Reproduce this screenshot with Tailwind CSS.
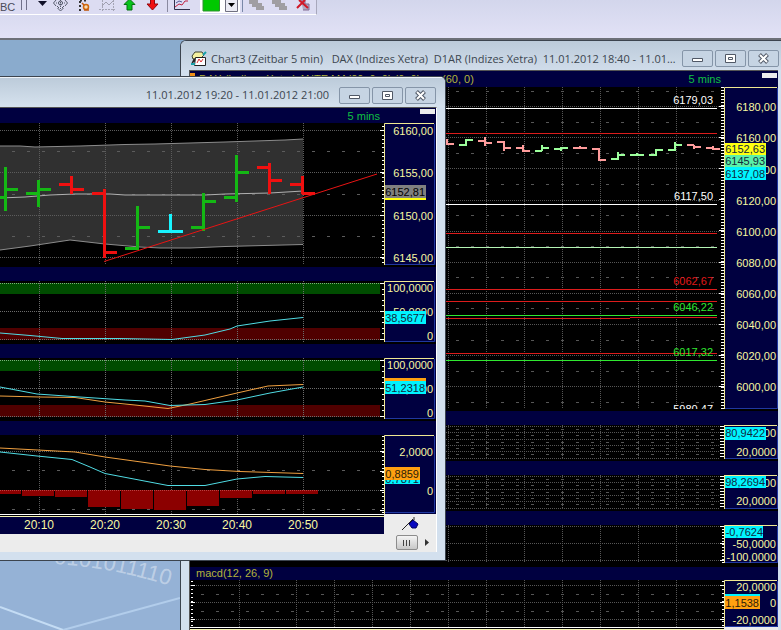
<!DOCTYPE html>
<html lang="de">
<head>
<meta charset="utf-8">
<meta name="viewport" content="width=device-width, initial-scale=1">
<title>Chart3 (Zeitbar 5 min)</title>
<script src="https://cdn.jsdelivr.net/npm/@tailwindcss/browser@4"></script>
</head>
<body class="font-['Liberation_Sans',Arial,sans-serif]">
<div class="flex h-screen flex-col overflow-hidden bg-[#8aabcd]">

  <!-- Toolbar -->
  <header class="h-10 shrink-0 border-b-2 border-[#6d7078] bg-linear-to-b from-[#d3d6ec] to-[#e2e2f6]">
    <div class="flex h-[15px] w-[317px] items-start border-r border-b border-r-[#a8a8bc] border-b-white bg-[#dcdcf2]" role="toolbar" aria-label="Chart">
      <button class="h-[14px] w-[16px] overflow-hidden text-left text-[11px] text-[#4a4a58]"><span class="block leading-[10px]">BC</span></button>
      <button aria-label="Pause"><svg class="block h-[14px] w-[17px]" viewBox="16 0 17 14"><path d="M21.5 0V10M26.500 0V10" stroke="#70708a"/></svg></button>
      <button aria-label="Menü"><svg class="block h-[14px] w-[17px]" viewBox="33 0 17 14"><path d="M38 1H47L42.500 6Z" fill="#101028"/></svg></button>
      <button aria-label="Verschieben"><svg class="block h-[14px] w-[23px]" viewBox="50 0 23 14"><g fill="none" stroke="#555a6a"><path d="M56 0L53.500 3L56 6M65 0L67.500 3L65 6M57.500 8L60.500 11L63.500 8"/><path d="M56 3H65M60.500 0V9" stroke-dasharray="1 1"/><circle cx="60.500" cy="3" r="2"/><path d="M57 6L59 8M64 6L62 8"/></g></svg></button>
      <button aria-label="Eigenschaften"><svg class="block h-[14px] w-[22px]" viewBox="73 0 22 14"><path d="M80 1V11M80 .5H88" stroke="#333" stroke-width="2" stroke-dasharray="2 2"/><circle cx="86" cy="7" r="2.500" fill="#f7d9b0" stroke="#d0680c" stroke-width="1.500"/><path d="M82 3L84 5M84 10H89" stroke="#c05a10" stroke-width="1.500"/></svg></button>
      <button aria-label="Raster"><svg class="block h-[14px] w-[24px]" viewBox="95 0 24 14"><path d="M102.500 0V11M99 9.500H115M113.500 0V11" stroke="#a5a5b5" stroke-dasharray="2 1"/><path d="M102 6L106 2L109 5L114 0" stroke="#a0a0b0" fill="none"/></svg></button>
      <button aria-label="Kaufen"><svg class="block h-[14px] w-[22px]" viewBox="119 0 22 14"><path d="M127 10V4.500H124L129.500 -1L135 4.500H132V10Z" fill="#08c41c" stroke="#057010"/></svg></button>
      <button aria-label="Verkaufen"><svg class="block h-[14px] w-[23px]" viewBox="141 0 23 14"><path d="M150.500 -1H154.500V4H158L152.500 10L147 4H150.500Z" fill="#f01010" stroke="#900810"/></svg></button>
      <button aria-label="Chartanalyse"><svg class="block h-[14px] w-[36px]" viewBox="164 0 36 14"><path d="M167.500 0V12" stroke="#8a8aa0"/><path d="M174.500 0V9.500H190" stroke="#30304a" fill="none"/><path d="M175 7L179 4L182 5L185 1H188" stroke="#c02040" fill="none"/><path d="M176 3L179 1L182 2" stroke="#555a9a" fill="none"/></svg></button>
      <button aria-label="Farbe"><svg class="block h-[14px] w-[43px]" viewBox="200 0 43 14"><path d="M200 0H240V13H200Z" fill="#fff"/><path d="M203 -1H219.500V11H203Z" fill="#00c800" stroke="#309030"/><path d="M225.500 -1H237.500V11.500H225.500Z" fill="#ececf4" stroke="#707080"/><path d="M228 3H235L231.500 7Z" fill="#000"/><path d="M242.500 0V12" stroke="#7a88a8"/></svg></button>
      <button aria-label="Kopieren"><svg class="block h-[14px] w-[24px]" viewBox="243 0 24 14"><path d="M249 0H258V3H262V6H264V10H256V7H252V4H249Z" fill="#a09ea2"/></svg></button>
      <button aria-label="Einfügen"><svg class="block h-[14px] w-[24px]" viewBox="267 0 24 14"><path d="M272 0H281V3H285V6H287V10H279V7H275V4H272Z" fill="#a09ea2"/></svg></button>
      <button aria-label="Löschen"><svg class="block h-[14px] w-[24px]" viewBox="291 0 24 14"><path d="M301 0H305V4H309V10H303" fill="#b0a8c0" stroke="#806890"/><path d="M297 8L305 0M299 0L308 8" stroke="#d01828" stroke-width="2"/></svg></button>
    </div>
  </header>

  <main class="relative min-h-0 flex-1">
    <!-- Wallpaper -->
    <svg class="absolute bottom-0 left-0 h-[70px] w-[180px] bg-[#95b2d6]" viewBox="0 560 180 70" aria-hidden="true">
      <defs><path id="arc" d="M54 564Q120 567 200 596"/></defs>
      <text class="fill-white/40 font-['Liberation_Sans'] text-[22px]"><textPath href="#arc">0101011110</textPath></text>
      <path d="M0 607L63 630" stroke="#c4dcf4" stroke-width="2"/><path d="M63 630L180 598" stroke="#b2cdeb" stroke-width="2"/>
    </svg>

    <!-- Chart3 window -->
    <section class="absolute inset-y-0 right-0 left-[180px] flex flex-col overflow-hidden rounded-tl-[6px] border-t border-l border-[#3c444e] bg-[#d3e0ee]" aria-label="Chart3">
      <div class="flex h-[29px] shrink-0 items-center gap-1 bg-linear-to-b from-[#bccbda] to-[#d0dcea] pt-[6px] pr-[2px] pl-[9px]">
        <svg class="h-[16px] w-[17px] shrink-0" viewBox="0 0 17 16" aria-hidden="true"><path d="M2 5L5 1H12L14 4L10 8H3Z" fill="#f4f0a0" stroke="#3c4030"/><path d="M1 13L4 7L6 10Z" fill="#222"/><path d="M5.500 6.500H15.500V14.500H4.500Z" fill="#fff" stroke="#222"/><path d="M7 12L9 8L11 11L13 8" fill="none" stroke="#d83030"/><path d="M13 4L16 1M1 13H5" stroke="#18a0a8" stroke-width="2"/></svg>
        <h2 class="min-w-0 flex-1 truncate font-['Open_Sans',sans-serif] text-[11px] leading-4 whitespace-pre text-[#3c4650]">Chart3 (Zeitbar 5 min)   DAX (Indizes Xetra)  D1AR (Indizes Xetra)  11.01.2012 18:40 - 11.01....</h2>
        <div class="flex shrink-0 gap-[2px]">
          <button aria-label="Minimieren" class="flex h-[17px] w-[31px] items-center justify-center rounded-[2px] border border-[#8595a8] bg-[#c6d4e3]"><svg class="h-[11px] w-[13px]" viewBox="0 0 13 11"><path d="M1.500 5.500H11.500V8.500H1.500Z" fill="#fff" stroke="#505866"/></svg></button>
          <button aria-label="Maximieren" class="flex h-[17px] w-[31px] items-center justify-center rounded-[2px] border border-[#8595a8] bg-[#c6d4e3]"><svg class="h-[11px] w-[13px]" viewBox="0 0 13 11"><path d="M1.500 1.500H11.500V9.500H1.500ZM4.500 4.500H8.500V6.500H4.500Z" fill="#fff" stroke="#505866"/></svg></button>
          <button aria-label="Schließen" class="flex h-[17px] w-[31px] items-center justify-center rounded-[2px] border border-[#8595a8] bg-[#c6d4e3]"><svg class="h-[11px] w-[13px]" viewBox="0 0 13 11"><path d="M2.500 1.500L10.500 9.500M10.500 1.500L2.500 9.500" stroke="#505866" stroke-width="4"/><path d="M3 2L10 9M10 2L3 9" stroke="#fff" stroke-width="2"/></svg></button>
        </div>
      </div>
      <div class="mr-[3px] ml-2 flex-1 border-t border-l border-[#555] bg-black">
        <div class="flex h-4 items-start bg-[#000040] pr-px text-[11px] leading-[17px] text-[#b4b43c]">
          <span class="mt-[2px] mr-1 size-[5px] bg-[#f09018]"></span>
          <span class="w-[243px] truncate">DAX (Indizes Xetra) ANTE MA(20, 0, 0) (0, 0)</span>
          <span class="flex-1 whitespace-nowrap">(60, 0)</span>
          <span class="mr-[41px] text-[#10c040]">5 mins</span>
          <button aria-label="Pane" class="mt-[2px] h-[5px] w-[15px] bg-[#ececec]"></button>
        </div>

        <svg class="block h-[322px] w-full" viewBox="190 87 588 322" preserveAspectRatio="xMaxYMin meet" role="img" aria-label="DAX 5 Minuten">
          <g stroke="#565656" stroke-dasharray="1 1" shape-rendering="crispEdges" fill="none">
            <path d="M239.500 87V409M296.500 87V409M334.500 87V409M372.500 87V409M410.500 87V409M448.500 87V409M486.500 87V409M524.500 87V409M562.500 87V409M600.500 87V409M638.500 87V409M676.500 87V409"/>
            <path d="M190 106.500H720M190 137.500H720M190 168.500H720M190 200.500H720M190 231.500H720M190 262.500H720M190 293.500H720M190 324.500H720M190 355.500H720M190 386.500H720"/>
            <path stroke-dasharray="3 12" stroke-dashoffset="4" d="M190 91.500H720M190 122.500H720M190 153.500H720M190 184.500H720M190 215.500H720M190 246.500H720M190 277.500H720M190 308.500H720M190 340.500H720M190 371.500H720M190 402.500H720"/>
          </g>
          <g shape-rendering="crispEdges">
            <path fill="#fff" d="M190 108H717V109H190ZM190 204H717V205H190Z"/>
            <path fill="#dc1c1c" d="M190 133H717V134H190ZM190 233H717V234H190ZM190 289H717V290H190ZM190 301H717V302H190ZM190 318H630V319H190ZM630 317H717V318H630ZM190 353H717V354H190Z"/>
            <path fill="#b4f4b4" d="M190 247H717V248H190Z"/>
            <path fill="#30e830" d="M190 315H717V316H190ZM190 360H717V361H190Z"/>
          </g>
          <g fill="none" shape-rendering="crispEdges">
            <path stroke="#ff9c9c" stroke-width="2" d="M447 139V144H454M478 141H485M485 137V146M485 143H492M497 142H504V148H511M504 148V151M516 148H523M523 145V151H530M573 148H587M580 146V149M592 149H599V160H606M687 145H694M694 145V149M694 147H701M706 148H713M713 146V150M713 149H720"/>
            <path stroke="#9cff9c" stroke-width="2" d="M459 145H466M466 146V140H473M535 151H542M542 151V145M542 148H549M554 149H561M561 147V151M561 148H568M611 159H618V152M618 155H625M630 155H644M637 153V156M649 155H656V149M656 150H663M668 150H675V142M675 145H682"/>
            <path stroke="#fff" stroke-width="3" stroke-dasharray="1 2" d="M722.500 87V409"/>
            <path stroke="#fff" stroke-width="5" stroke-dasharray="1 30.100" d="M721.500 106V409"/>
          </g>
          <g class="font-['Liberation_Sans'] text-[11px]" text-anchor="end">
            <text x="713" y="104" fill="#fff">6179,03</text><text x="713" y="200" fill="#fff">6117,50</text>
            <text x="713" y="285" fill="#e01818">6062,67</text><text x="713" y="311" fill="#30e830">6046,22</text>
            <text x="713" y="356" fill="#30e830">6017,32</text><text x="713" y="413" fill="#fff">5980,47</text>
          </g>
          <path d="M724 87H778V409H724Z" fill="#000040"/>
          <path d="M724.500 409V87.500H777" stroke="#f0e890" fill="none"/><path d="M777.500 88V408.500H725" stroke="#2038a0" fill="none"/>
          <g class="font-['Liberation_Sans'] text-[11px]" text-anchor="end" fill="#f8f8a0">
            <text x="776" y="111">6180,00</text><text x="776" y="142">6160,00</text><text x="776" y="174">6140,00</text><text x="776" y="205">6120,00</text><text x="776" y="236">6100,00</text><text x="776" y="267">6080,00</text><text x="776" y="298">6060,00</text><text x="776" y="329">6040,00</text><text x="776" y="360">6020,00</text><text x="776" y="391">6000,00</text>
            <path d="M725 143H766V155H725Z" fill="#ffff10"/><path d="M725 155H766V167H725Z" fill="#5cf0a8"/><path d="M725 167H766V180H725Z" fill="#00f4ff"/>
            <g fill="#10283c"><text x="765" y="153">6152,63</text><text x="765" y="165">6145,93</text><text x="765" y="178">6137,08</text></g>
          </g>
        </svg>

        <div class="h-4 border-t-2 border-black bg-[#000040]"></div>
        <svg class="block h-[34px] w-full" viewBox="190 425 588 34" preserveAspectRatio="xMaxYMin meet" role="img" aria-label="Indikator 80,9422">
          <g id="dense" fill="none" shape-rendering="crispEdges" stroke="#565656" stroke-dasharray="1 1">
            <path d="M448.500 425V459M486.500 425V459M524.500 425V459M562.500 425V459M600.500 425V459M638.500 425V459M676.500 425V459M190 426.500H720M190 432.500H720M190 439.500H720M190 445.500H720M190 451.500H720M190 458.500H720"/>
            <path stroke-dasharray="3 12" stroke-dashoffset="4" d="M190 429.500H720M190 435.500H720M190 442.500H720M190 448.500H720M190 454.500H720"/>
            <path stroke="#fff" stroke-width="4" stroke-dasharray="1 2" d="M722 426V459"/>
            <path d="M724 425H778V459H724Z" fill="#000040" stroke="none"/>
            <path d="M724.500 459V425.500H777" stroke="#f0e890" stroke-dasharray="none"/><path d="M777.500 426V458.500H725" stroke="#2038a0" stroke-dasharray="none"/>
          </g>
          <g class="font-['Liberation_Sans'] text-[11px]" text-anchor="end" fill="#f8f8a0">
            <text x="776" y="437">80,0000</text><text x="776" y="456">20,0000</text>
            <path d="M725 427H766V440H725Z" fill="#00f4ff"/><text x="765" y="437" fill="#10283c">80,9422</text>
          </g>
        </svg>

        <div class="h-4 border-t-2 border-black bg-[#000040]"></div>
        <svg class="block h-[34px] w-full" viewBox="190 475 588 34" preserveAspectRatio="xMaxYMin meet" role="img" aria-label="Indikator 98,2694">
          <use href="#dense" y="50"/>
          <g class="font-['Liberation_Sans'] text-[11px]" text-anchor="end" fill="#f8f8a0">
            <text x="776" y="487">80,0000</text><text x="776" y="505">20,0000</text>
            <path d="M725 476H766V488H725Z" fill="#00f4ff"/><text x="765" y="486" fill="#10283c">98,2694</text>
          </g>
        </svg>

        <div class="h-4 border-t-2 border-black bg-[#000040]"></div>
        <svg class="block h-[38px] w-full" viewBox="190 525 588 38" preserveAspectRatio="xMaxYMin meet" role="img" aria-label="Indikator -0,7624">
          <g fill="none" shape-rendering="crispEdges">
            <path stroke="#565656" stroke-dasharray="1 1" d="M448.500 525V563M486.500 525V563M524.500 525V563M562.500 525V563M600.500 525V563M638.500 525V563M676.500 525V563M190 526.500H720M190 543.500H720M190 560.500H720"/>
            <path stroke="#fff" stroke-width="2" stroke-dasharray="1 2" d="M723 526V563"/><path stroke="#fff" stroke-width="4" stroke-dasharray="1 16" d="M722 526V563"/>
          </g>
          <path d="M724 525H778V563H724Z" fill="#000040"/>
          <path d="M724.500 563V525.500H777" stroke="#f0e890" fill="none"/><path d="M777.500 526V562.500H725" stroke="#2038a0" fill="none"/>
          <g class="font-['Liberation_Sans'] text-[11px]" text-anchor="end" fill="#f8f8a0">
            <text x="776" y="548">-50,0000</text><text x="776" y="561">-100,0000</text>
            <path d="M725 526H763V538H725Z" fill="#00f4ff"/><text x="763" y="536" fill="#10283c">-0,7624</text>
          </g>
        </svg>

        <div class="h-[17px] border-t-4 border-black bg-[#000040] pl-[6px] text-[11px] leading-[13px] text-[#b4b43c]">macd(12, 26, 9)</div>
        <svg class="block h-[50px] w-full" viewBox="190 580 588 50" preserveAspectRatio="xMaxYMin meet" role="img" aria-label="MACD">
          <g fill="none" shape-rendering="crispEdges">
            <path stroke="#565656" stroke-dasharray="1 1" d="M239.500 580V627M296.500 580V627M334.500 580V627M372.500 580V627M410.500 580V627M448.500 580V627M486.500 580V627M524.500 580V627M562.500 580V627M600.500 580V627M638.500 580V627M676.500 580V627M190 585.500H720M190 602.500H720M190 619.500H720"/>
            <path stroke="#565656" stroke-dasharray="3 12" stroke-dashoffset="4" d="M190 594.500H720M190 611.500H720"/>
            <path stroke="#fff" stroke-width="2" stroke-dasharray="1 3" d="M192 581V627M723 581V627"/><path stroke="#fff" stroke-width="4" stroke-dasharray="1 16" d="M193 585V627M722 585V627"/>
            <path stroke="#fff" d="M190 627.500H724"/><path stroke="#f4f4b0" d="M190 629.500H724"/>
          </g>
          <path d="M724 627H778V630H724Z" fill="#ececec"/>
          <path d="M724 580H778V627H724Z" fill="#000040"/>
          <path d="M724.500 627V580.500H777" stroke="#f0e890" fill="none"/><path d="M777.500 581V626.500H725" stroke="#2038a0" fill="none"/>
          <g class="font-['Liberation_Sans'] text-[11px]" text-anchor="end" fill="#f8f8a0">
            <text x="776" y="591">20,0000</text><text x="776" y="607">0</text><text x="776" y="624">-20,0000</text>
            <path d="M725 594H760V596H725Z" fill="#00f4ff"/><path d="M725 596H760V609H725Z" fill="#ffa010"/><text x="759" y="607" fill="#2c1c08">1,1538</text>
          </g>
        </svg>
      </div>
    </section>

    <!-- Front chart window -->
    <section class="absolute top-9 left-0 w-[446px] overflow-hidden rounded-tr-[6px] border-t border-r border-b border-[#3c444e] bg-[#d3e0ee]" aria-label="Chart">
      <div class="flex h-[30px] items-center justify-end gap-[10px] border-t border-white/60 bg-linear-to-b from-[#bccbda] to-[#d6e2ee] pr-[9px] pt-[5px]">
        <h2 class="font-['Open_Sans',sans-serif] text-[11px] leading-4 text-[#3c4650]">11.01.2012 19:20 - 11.01.2012 21:00</h2>
        <div class="flex gap-[2px]">
          <button aria-label="Minimieren" class="flex h-[17px] w-[31px] items-center justify-center rounded-[2px] border border-[#8595a8] bg-[#c6d4e3]"><svg class="h-[11px] w-[13px]" viewBox="0 0 13 11"><path d="M1.500 5.500H11.500V8.500H1.500Z" fill="#fff" stroke="#505866"/></svg></button>
          <button aria-label="Maximieren" class="flex h-[17px] w-[31px] items-center justify-center rounded-[2px] border border-[#8595a8] bg-[#c6d4e3]"><svg class="h-[11px] w-[13px]" viewBox="0 0 13 11"><path d="M1.500 1.500H11.500V9.500H1.500ZM4.500 4.500H8.500V6.500H4.500Z" fill="#fff" stroke="#505866"/></svg></button>
          <button aria-label="Schließen" class="flex h-[17px] w-[31px] items-center justify-center rounded-[2px] border border-[#8595a8] bg-[#c6d4e3]"><svg class="h-[11px] w-[13px]" viewBox="0 0 13 11"><path d="M2.500 1.500L10.500 9.500M10.500 1.500L2.500 9.500" stroke="#505866" stroke-width="4"/><path d="M3 2L10 9M10 2L3 9" stroke="#fff" stroke-width="2"/></svg></button>
        </div>
      </div>
      <div class="mr-2 mb-2 border-t border-r border-t-[#555] border-r-white bg-black">
        <div class="flex h-[15px] items-start justify-end bg-[#000040] pr-px text-[11px] leading-[17px] text-[#10c040]">
          <span class="mr-10">5 mins</span>
          <button aria-label="Pane" class="mt-px h-[5px] w-[15px] bg-[#ececec]"></button>
        </div>

        <svg class="block h-[142px] w-full" viewBox="0 123 436 142" preserveAspectRatio="xMaxYMin meet" role="img" aria-label="Kursverlauf">
          <path d="M0 146L20 146L35 147L80 146L125 144.500L155 144L225 142L285 140L303 139V244.500L225 246.500L190 248L160 248L140 247L105 244L70 240L30 246L0 250Z" fill="#303030"/>
          <g stroke="#5c5c5c" stroke-dasharray="1 1" shape-rendering="crispEdges" fill="none">
            <path d="M39.500 123V265M105.500 123V265M171.500 123V265M237.500 123V265M303.500 123V265M0 130.500H380M0 172.500H380M0 215.500H380M0 257.500H380"/>
            <path stroke-dasharray="3 12" stroke-dashoffset="3" d="M0 151.500H380M0 194.500H380M0 236.500H380"/>
          </g>
          <g fill="none" stroke="#8c8c8c"><path d="M0 146L20 146L35 147L80 146L125 144.500L155 144L225 142L285 140L303 139M303 244.500L225 246.500L190 248L160 248L140 247L105 244L70 240L30 246L0 250"/><path stroke="#b0b0b0" d="M0 198L25 197L50 195L75 194L110 194L125 195L205 195L225 194L270 193L303 191"/></g>
          <g fill="none" stroke-width="3" shape-rendering="crispEdges">
            <path stroke="#14b814" d="M5.500 167V211M0 197.500H5M5 189.500H18M38.500 180V207M26 193.500H38M38 189.500H51M137.500 206V250M125 248.500H137M137 227.500H150M203.500 193V231M191 227.500H203M203 201.500H216M236.500 155V202M224 197.500H236M236 172.500H249"/>
            <path stroke="#f01010" d="M71.500 176V194M59 184.500H71M71 189.500H84M104.500 189V258M92 193.500H104M104 252.500H117M269.500 163V194M257 167.500H269M269 180.500H282M302.500 176V194M290 184.500H302M302 193.500H315"/>
            <path stroke="#18f4ff" d="M170.500 214V232M158 231.500H183"/>
          </g>
          <path d="M104 261.500L377 174" stroke="#e81414" fill="none"/>
          <g stroke="#fff" shape-rendering="crispEdges"><path stroke-width="2" stroke-dasharray="1 3.250" d="M383 126V265"/><path stroke-width="4" stroke-dasharray="1 41.300" d="M382 130V265"/></g>
          <path d="M384 123H436V265H384Z" fill="#000040"/>
          <path d="M384.500 265V123.500H434" stroke="#f0e890" fill="none"/><path d="M434.500 124V264.500H385" stroke="#2038a0" fill="none"/>
          <g class="font-['Liberation_Sans'] text-[11px]" text-anchor="end" fill="#f8f8a0">
            <text x="433" y="135">6160,00</text><text x="433" y="177">6155,00</text><text x="433" y="220">6150,00</text><text x="433" y="262">6145,00</text>
            <path d="M385 185H426V198H385Z" fill="#808080"/><path d="M385 198H426V200H385Z" fill="#ffff10"/><text x="425" y="196" fill="#000">6152,81</text>
          </g>
        </svg>

        <div class="h-4 border-t-2 border-black bg-[#000040]"></div>
        <svg class="block h-[61px] w-full" viewBox="0 281 436 61" preserveAspectRatio="xMaxYMin meet" role="img" aria-label="Oszillator 38,5677">
          <g id="osc">
            <path d="M0 283H380V294H0Z" fill="#004c00"/><path d="M0 328H380V340H0Z" fill="#500000"/>
            <g stroke="#6c6c6c" stroke-dasharray="1 1" shape-rendering="crispEdges" fill="none"><path d="M39.500 281V342M105.500 281V342M171.500 281V342M237.500 281V342M303.500 281V342M0 311.500H380M0 339.500H380"/><path stroke="#78b078" d="M0 283.500H380"/></g>
            <g stroke="#fff" shape-rendering="crispEdges"><path stroke-width="2" stroke-dasharray="1 4.600" d="M383 283V341"/><path stroke-width="4" stroke-dasharray="1 27" d="M382 283V341"/></g>
            <path d="M384 281H436V342H384Z" fill="#000040"/>
            <path d="M384.500 342V281.500H434" stroke="#f0e890" fill="none"/><path d="M434.500 282V341.500H385" stroke="#2038a0" fill="none"/>
            <g class="font-['Liberation_Sans'] text-[11px]" text-anchor="end" fill="#f8f8a0"><text x="433" y="292">100,0000</text><text x="433" y="316">50,0000</text><text x="433" y="340">0</text></g>
          </g>
          <path d="M0 333L30 335.500L62 338.500L120 338.500L172 339.500L205 335L230 329L237 326L270 321L303 317.500" fill="none" stroke="#50dce4"/>
          <path d="M385 311H426V324H385Z" fill="#00f4ff"/><text class="font-['Liberation_Sans'] text-[11px]" text-anchor="end" x="425" y="322" fill="#10283c">38,5677</text>
        </svg>

        <div class="h-4 border-t-2 border-black bg-[#000040]"></div>
        <svg class="block h-[61px] w-full" viewBox="0 358 436 61" preserveAspectRatio="xMaxYMin meet" role="img" aria-label="Oszillator 51,2318">
          <use href="#osc" y="77"/>
          <path d="M0 396L40 397L75 397.500L105 402L135 405L168 408.500L190 404L237 393L268 386L303 384.500" fill="none" stroke="#f0a040"/>
          <path d="M0 387L37 394L80 397L125 400L145 401L170 405.500L205 404.500L237 400L270 393L303 387" fill="none" stroke="#50dce4"/>
          <path d="M385 378H426V381H385Z" fill="#ffa010"/><path d="M385 381H426V394H385Z" fill="#00f4ff"/><text class="font-['Liberation_Sans'] text-[11px]" text-anchor="end" x="425" y="392" fill="#10283c">51,2318</text>
        </svg>

        <div class="h-4 border-t-2 border-black bg-[#000040]"></div>
        <svg class="block h-[79px] w-full" viewBox="0 435 436 79" preserveAspectRatio="xMaxYMin meet" role="img" aria-label="MACD">
          <g stroke="#5c5c5c" stroke-dasharray="1 1" shape-rendering="crispEdges" fill="none">
            <path d="M39.500 435V514M105.500 435V514M171.500 435V514M237.500 435V514M303.500 435V514M0 451.500H380M0 490.500H380"/>
            <path stroke-dasharray="3 12" stroke-dashoffset="3" d="M0 470.500H380M0 509.500H380"/>
          </g>
          <path fill="#8c0000" d="M0 490H21V494H0ZM22 490H54V496H22ZM55 490H87V497H55ZM88 490H120V507H88ZM121 490H153V509H121ZM154 490H186V510H154ZM187 490H219V506H187ZM220 490H252V498H220ZM253 490H285V494H253ZM286 490H318V494H286Z"/>
          <path d="M0 490.500H318" stroke="#b84040" stroke-dasharray="1 1"/>
          <path d="M0 448L75 452L105 457L170 466L205 469.500L240 471.500L303 473.500" fill="none" stroke="#f0a040"/>
          <path d="M0 452L37 456L72 459.500L90 467L105 473.500L168 485.500L205 485.500L237 479L265 476.500L303 477.500" fill="none" stroke="#50dce4"/>
          <g stroke="#fff" shape-rendering="crispEdges"><path stroke-width="2" stroke-dasharray="1 3" d="M383 436V514"/><path stroke-width="4" stroke-dasharray="1 18.500" d="M382 451V514"/></g>
          <path d="M384 435H436V514H384Z" fill="#000040"/>
          <path d="M384.500 514V435.500H434" stroke="#f0e890" fill="none"/><path d="M434.500 436V512.500H385" stroke="#2038a0" fill="none"/>
          <g class="font-['Liberation_Sans'] text-[11px]" text-anchor="end" fill="#f8f8a0">
            <text x="433" y="456">2,0000</text><text x="433" y="495">0</text>
            <path d="M385 480H420V484H385Z" fill="#00f4ff"/><text x="419" y="483" fill="#10283c">0,7871</text>
            <path d="M385 467H420V480H385Z" fill="#ffa010"/><text x="419" y="478" fill="#2c1c08">0,8859</text>
          </g>
        </svg>

        <div class="flex h-5 bg-[#ececec]">
          <div class="w-[384px] border-t border-white bg-black pt-px">
            <div class="flex h-[18px] border-t border-[#f4f4b0] bg-[#000040] pl-[6px] text-[12px] leading-[17px] text-[#f8f8a0]">
              <span class="w-[66px] text-center">20:10</span><span class="w-[66px] text-center">20:20</span><span class="w-[66px] text-center">20:30</span><span class="w-[66px] text-center">20:40</span><span class="w-[66px] text-center">20:50</span>
            </div>
          </div>
          <button aria-label="Anheften" class="flex flex-1 items-center justify-center"><svg class="h-4 w-5" viewBox="0 0 20 16"><path d="M2 14L13 3M14 1V4" stroke="#222"/><path d="M9 8L13 4L18 8L16 12L12 12Z" fill="#0808c0" stroke="#000060"/></svg></button>
        </div>
        <div class="flex h-[18px] items-start justify-end bg-[#ececec] pt-px">
          <button aria-label="Bildlauf" class="flex h-[15px] w-[22px] items-center justify-center rounded-[2px] border border-[#8c8c8c] bg-linear-to-b from-[#f4f4f4] to-[#c8c8c8]"><svg class="h-2 w-2" viewBox="0 0 8 8"><path d="M.5 1V7M3.500 1V7M6.500 1V7" stroke="#444"/></svg></button>
          <button aria-label="Rechts" class="flex h-[15px] w-[18px] items-center justify-center"><svg class="h-[7px] w-1" viewBox="0 0 4 7"><path d="M0 0L4 3.500L0 7Z" fill="#333"/></svg></button>
        </div>
      </div>
    </section>
  </main>
</div>
</body>
</html>
